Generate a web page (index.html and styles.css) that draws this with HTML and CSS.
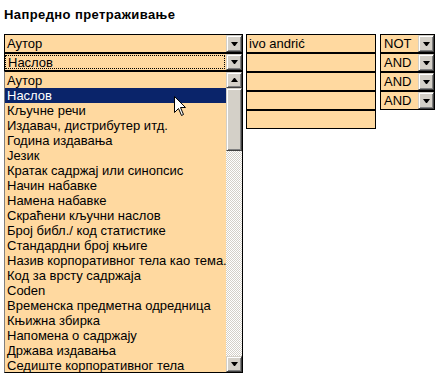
FILE: index.html
```html
<!DOCTYPE html>
<html>
<head>
<meta charset="utf-8">
<link rel="stylesheet" href="styles.css">
</head>
<body>
<h1 class="title">Напредно претраживање</h1>
<div class="form">
  <div class="col-fields">
    <div class="combo"><span class="combo-text">Аутор</span><span class="btn"><span class="tri-down"></span></span></div>
    <div class="combo combo-short"><span class="combo-text focus">Наслов</span><span class="btn"><span class="tri-down"></span></span></div>
    <div class="listbox">
      <ul class="items">
        <li>Аутор</li>
        <li class="selected">Наслов</li>
        <li>Кључне речи</li>
        <li>Издавач, дистрибутер итд.</li>
        <li>Година издавања</li>
        <li>Језик</li>
        <li>Кратак садржај или синопсис</li>
        <li>Начин набавке</li>
        <li>Намена набавке</li>
        <li>Скраћени кључни наслов</li>
        <li>Број библ./ код статистике</li>
        <li>Стандардни број књиге</li>
        <li>Назив корпоративног тела као тема.</li>
        <li>Код за врсту садржаја</li>
        <li>Coden</li>
        <li>Временска предметна одредница</li>
        <li>Књижна збирка</li>
        <li>Напомена о садржају</li>
        <li>Држава издавања</li>
        <li>Седиште корпоративног тела</li>
      </ul>
      <div class="vscroll">
        <span class="btn sbtn"><span class="tri-up"></span></span>
        <span class="btn thumb"></span>
        <span class="track"></span>
        <span class="btn sbtn"><span class="tri-down"></span></span>
      </div>
    </div>
  </div>
  <div class="col-terms">
    <div class="term">ivo andrić</div>
    <div class="term"></div>
    <div class="term"></div>
    <div class="term"></div>
    <div class="term"></div>
  </div>
  <div class="col-ops">
    <div class="op"><span class="op-text">NOT</span><span class="btn"><span class="tri-down"></span></span></div>
    <div class="op"><span class="op-text">AND</span><span class="btn"><span class="tri-down"></span></span></div>
    <div class="op"><span class="op-text">AND</span><span class="btn"><span class="tri-down"></span></span></div>
    <div class="op"><span class="op-text">AND</span><span class="btn"><span class="tri-down"></span></span></div>
  </div>
</div>
<svg class="cursor" width="13" height="21" viewBox="0 0 13 21">
  <polygon points="0.5,0.5 0.5,16.5 4.5,12.5 7.5,19.5 9.5,18.5 6.5,11.5 11.5,11.5" fill="#fff" stroke="#000" stroke-width="1"/>
</svg>
</body>
</html>
```

FILE: styles.css
```css
* { box-sizing: border-box; }
html, body { margin: 0; padding: 0; background: #fff; }
body {
  font-family: "Liberation Sans", Arial, sans-serif;
  font-size: 13px;
  color: #000;
  padding: 7px 0 0 4px;
  position: relative;
  height: 380px;
  overflow: hidden;
}
.title {
  margin: 0 0 12px 0;
  font-size: 13px;
  line-height: 15px;
  font-weight: bold;
  letter-spacing: 0.4px;
}
.form {
  display: flex;
  align-items: flex-start;
}
.col-fields {
  width: 239px;
  display: flex;
  flex-direction: column;
}
.col-terms {
  width: 130px;
  margin-left: 3px;
  display: flex;
  flex-direction: column;
}
.col-ops {
  width: 55px;
  margin-left: 4px;
  display: flex;
  flex-direction: column;
}
.combo, .op {
  height: 19px;
  border: 1px solid #000;
  background: #ffd9a0;
  display: flex;
  line-height: 15px;
}
.combo-short { height: 18px; }
.combo-text {
  flex: 1;
  padding-left: 2px;
  line-height: 17px;
}
.combo-short .combo-text { line-height: 14px; }
.focus {
  margin: 1px 1px 1px 0;
  padding-left: 2px;
  border: 1px dotted #000;
}
.op-text {
  flex: 1;
  padding-left: 3px;
  line-height: 17px;
}
.btn {
  width: 16px;
  flex: none;
  background: #d4d0c8;
  border: 1px solid;
  border-color: #d4d0c8 #404040 #404040 #d4d0c8;
  box-shadow: inset 1px 1px #fff, inset -1px -1px #808080;
  display: flex;
  align-items: center;
  justify-content: center;
}
.tri-down, .tri-up {
  width: 1px;
  height: 0;
  border-left: 3px solid transparent;
  border-right: 3px solid transparent;
  box-sizing: content-box;
}
.tri-down { border-top: 4px solid #000; }
.tri-up { border-bottom: 4px solid #000; }
.listbox {
  height: 302px;
  border: 1px solid #000;
  border-left-color: #808080;
  background: #ffd9a0;
  display: flex;
  overflow: hidden;
}
.items {
  flex: 1;
  list-style: none;
  margin: 0;
  padding: 1px 0 0 0;
  overflow: hidden;
}
.items li {
  height: 15px;
  line-height: 15px;
  padding-left: 2px;
  white-space: nowrap;
}
.items li.selected {
  background: #0a246a;
  color: #fff;
}
.vscroll {
  width: 16px;
  display: flex;
  flex-direction: column;
}
.sbtn { height: 16px; }
.thumb { height: 63px; }
.track {
  flex: 1;
  background: repeating-conic-gradient(#d4d0c8 0 25%, #fff 0 50%) 0 0 / 2px 2px;
}
.term {
  height: 19px;
  border: 1px solid #000;
  background: #ffd9a0;
  padding-left: 2px;
  line-height: 17px;
}
.cursor {
  position: absolute;
  left: 174px;
  top: 96px;
}
```
